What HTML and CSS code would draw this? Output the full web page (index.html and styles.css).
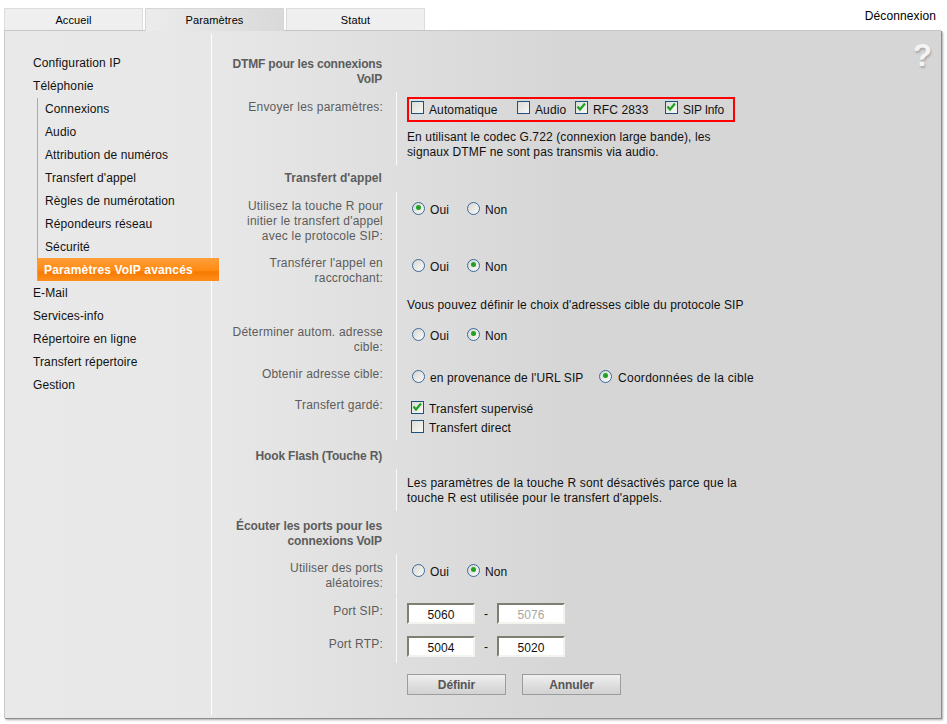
FILE: index.html
```html
<!DOCTYPE html>
<html lang="fr">
<head>
<meta charset="utf-8">
<title>Paramètres VoIP avancés</title>
<link rel="stylesheet" href="styles.css">
</head>
<body>
<header class="top">
  <nav class="tabs">
    <a class="tab">Accueil</a>
    <a class="tab active">Paramètres</a>
    <a class="tab">Statut</a>
  </nav>
  <a class="logout">Déconnexion</a>
</header>
<main class="panel">
  <aside class="side">
    <ul class="menu">
      <li>Configuration IP</li>
      <li>Téléphonie
        <ul class="sub">
          <li>Connexions</li>
          <li>Audio</li>
          <li>Attribution de numéros</li>
          <li>Transfert d'appel</li>
          <li>Règles de numérotation</li>
          <li>Répondeurs réseau</li>
          <li>Sécurité</li>
          <li class="current">Paramètres VoIP avancés</li>
        </ul>
      </li>
      <li>E-Mail</li>
      <li>Services-info</li>
      <li>Répertoire en ligne</li>
      <li>Transfert répertoire</li>
      <li>Gestion</li>
    </ul>
  </aside>
  <section class="form">
    <span class="help">?</span>

    <h3 class="heading h-dtmf">DTMF pour les connexions<br>VoIP</h3>

    <div class="row r-send">
      <div class="lbl">Envoyer les paramètres:</div>
      <div class="val">
        <div class="redbox">
          <span class="opt o-auto"><i class="cb"></i>Automatique</span>
          <span class="opt o-audio"><i class="cb"></i>Audio</span>
          <span class="opt o-rfc"><i class="cb"><svg viewBox="0 0 11 11"><path d="M1.5 4.5L4 7.5 9 1.5"/></svg></i>RFC 2833</span>
          <span class="opt o-sip"><i class="cb"><svg viewBox="0 0 11 11"><path d="M1.5 4.5L4 7.5 9 1.5"/></svg></i>SIP Info</span>
        </div>
        <p class="note n-g722">En utilisant le codec G.722 (connexion large bande), les<br>signaux DTMF ne sont pas transmis via audio.</p>
      </div>
    </div>

    <h3 class="heading h-trans">Transfert d'appel</h3>

    <div class="row r-three">
      <div class="lbl">Utilisez la touche R pour<br>initier le transfert d'appel<br>avec le protocole SIP:</div>
      <div class="val"><div class="radios"><span class="opt o-oui"><i class="rd on"></i>Oui</span><span class="opt"><i class="rd"></i>Non</span></div></div>
    </div>
    <div class="row r-two">
      <div class="lbl">Transférer l'appel en<br>raccrochant:</div>
      <div class="val"><div class="radios"><span class="opt o-oui"><i class="rd"></i>Oui</span><span class="opt"><i class="rd on"></i>Non</span></div></div>
    </div>
    <div class="row r-vous">
      <div class="lbl"></div>
      <div class="val"><p class="note">Vous pouvez définir le choix d'adresses cible du protocole SIP</p></div>
    </div>
    <div class="row r-two">
      <div class="lbl">Déterminer autom. adresse<br>cible:</div>
      <div class="val"><div class="radios"><span class="opt o-oui"><i class="rd"></i>Oui</span><span class="opt"><i class="rd on"></i>Non</span></div></div>
    </div>
    <div class="row r-one">
      <div class="lbl">Obtenir adresse cible:</div>
      <div class="val"><div class="radios"><span class="opt o-url"><i class="rd"></i>en provenance de l'URL SIP</span><span class="opt o-cible"><i class="rd on"></i>Coordonnées de la cible</span></div></div>
    </div>
    <div class="row r-guard">
      <div class="lbl">Transfert gardé:</div>
      <div class="val">
        <div class="checks">
          <span class="opt"><i class="cb"><svg viewBox="0 0 11 11"><path d="M1.5 4.5L4 7.5 9 1.5"/></svg></i>Transfert supervisé</span>
          <span class="opt"><i class="cb"></i>Transfert direct</span>
        </div>
      </div>
    </div>

    <h3 class="heading h-hook">Hook Flash (Touche R)</h3>

    <div class="row r-hook">
      <div class="lbl"></div>
      <div class="val"><p class="note n-hook">Les paramètres de la touche R sont désactivés parce que la<br>touche R est utilisée pour le transfert d'appels.</p></div>
    </div>

    <h3 class="heading h-ports">Écouter les ports pour les<br>connexions VoIP</h3>

    <div class="row r-rand">
      <div class="lbl">Utiliser des ports<br>aléatoires:</div>
      <div class="val"><div class="radios"><span class="opt o-oui"><i class="rd"></i>Oui</span><span class="opt"><i class="rd on"></i>Non</span></div></div>
    </div>
    <div class="row r-port">
      <div class="lbl">Port SIP:</div>
      <div class="val ports"><span class="field">5060</span><span class="dash">-</span><span class="field off">5076</span></div>
    </div>
    <div class="row r-port">
      <div class="lbl">Port RTP:</div>
      <div class="val ports"><span class="field">5004</span><span class="dash">-</span><span class="field">5020</span></div>
    </div>
    <div class="actions">
      <button class="btn">Définir</button>
      <button class="btn">Annuler</button>
    </div>
  </section>
</main>
</body>
</html>
```
FILE: styles.css
```css
* { box-sizing: border-box; }
html, body { margin: 0; padding: 0; }
body {
  width: 947px;
  height: 724px;
  overflow: hidden;
  background: #fff;
  font-family: "Liberation Sans", Arial, sans-serif;
  font-size: 12px;
  line-height: 15px;
  letter-spacing: 0.11px;
  color: #000;
}
ul { list-style: none; margin: 0; padding: 0; }
p, h3 { margin: 0; }

/* top bar */
.top { display: flex; justify-content: space-between; height: 30px; padding-left: 4px; }
.tabs { display: flex; gap: 2px; padding-top: 8px; }
.tab {
  width: 139px;
  height: 22px;
  border: 1px solid #dcdcdc;
  border-bottom: 0;
  background: #efefef;
  text-align: center;
  line-height: 23px;
  font-size: 11px;
}
.tab.active {
  height: 23px;
  background: linear-gradient(90deg, #ececec, #d9d9d9);
  border-color: #d6d6d6;
  position: relative;
  z-index: 1;
}
.logout { padding: 8px 11px 0 0; line-height: 16px; }

/* panel */
.panel {
  display: flex;
  width: 937px;
  height: 688px;
  margin-left: 4px;
  padding: 3px 0 0;
  background: linear-gradient(90deg, #e9e9e9 0, #e7e7e7 220px, #d6d6d6 560px);
  border-top: 1px solid #c6c6c6;
  border-left: 1px solid #c9c9c9;
  box-shadow: 1px 1px 0 #8c8c8c, 2px 2px 2px #aaa;
}

/* side menu */
.side { width: 207px; height: 681px; flex: none; border-right: 1px solid #fff; padding: 18px 0 0 28px; }
.menu > li { line-height: 23px; color: #111; }
.sub { margin-left: 4px; border-left: 1px solid #aaa; }
.sub li { padding-left: 7px; line-height: 23px; }
.sub .current {
  width: 181px;
  height: 23px;
  padding-left: 6px;
  margin-top: -1px;
  margin-bottom: 1px;
  line-height: 25px;
  color: #fff;
  font-weight: bold;
  letter-spacing: 0.17px;
  background: linear-gradient(180deg, #ff9f3a 0, #ff8a12 55%, #f57a00 60%, #ff8e1c 100%);
  position: relative;
}

/* form */
.form { position: relative; width: 729px; padding: 23px 0 0 7px; color: #5c5c5c; }
.help {
  position: absolute;
  right: 9px;
  top: 4px;
  font-size: 31px;
  line-height: 36px;
  font-weight: bold;
  color: #f4f4f4;
  text-shadow: 1px 2px 2px #aaa;
}
.heading { width: 163px; font-size: 12px; line-height: 15px; font-weight: bold; letter-spacing: -0.16px; text-align: right; color: #5c5c5c; }
.h-dtmf { height: 35px; }
.h-trans { height: 27px; padding-top: 6px; letter-spacing: 0.08px; }
.h-hook { height: 29px; padding-top: 9px; }
.h-ports { height: 43px; padding-top: 8px; letter-spacing: -0.08px; }

.row { display: flex; }
.lbl { width: 164px; flex: none; text-align: right; padding-top: 7px; letter-spacing: 0.2px; }
.val { margin-left: 13px; padding-left: 10px; border-left: 1px solid #fafafa; color: #111; flex: 1; }
.note { color: #111; padding-top: 7px; }
.note.n-hook { letter-spacing: 0.18px; }

.r-send { height: 73px; }
.r-send .lbl { padding-top: 8px; }
.r-three { height: 57px; }
.r-two { height: 42px; }
.r-vous { height: 27px; }
.r-one { height: 31px; }
.r-guard { height: 49px; }
.r-hook { height: 42px; }
.r-rand { height: 42px; margin-bottom: 1px; }
.r-port { height: 33px; }

.redbox {
  display: flex;
  width: 328px;
  height: 25px;
  border: 2px solid #f00;
  align-items: center;
  padding: 1px 0 0 2px;
  margin-top: 5px;
}
.note.n-g722 { padding-top: 8px; }

.opt { display: inline-flex; align-items: center; white-space: nowrap; }
.cb {
  display: inline-block;
  width: 13px;
  height: 13px;
  margin-right: 5px;
  margin-top: -5px;
  border: 1px solid #1c5180;
  background: linear-gradient(135deg, #dcdcd6, #f8f8f8);
  flex: none;
}
.cb svg { display: block; width: 11px; height: 11px; fill: none; stroke: #21a121; stroke-width: 2.2; }
.o-auto { width: 106px; }
.o-audio { width: 58px; }
.o-rfc { width: 90px; }
.o-sip { letter-spacing: -0.2px; }

.radios { display: flex; align-items: center; height: 15px; margin-top: 11px; padding-left: 5px; }
.rd {
  position: relative;
  display: inline-block;
  width: 13px;
  height: 13px;
  margin-right: 5px;
  margin-top: -5px;
  border: 1.5px solid #3a6a9a;
  border-radius: 50%;
  background: linear-gradient(135deg, #d6d6d0, #fbfbfb);
  flex: none;
}
.rd.on::after {
  content: "";
  position: absolute;
  left: 2.5px;
  top: 2.5px;
  width: 5px;
  height: 5px;
  border-radius: 50%;
  background: #21a121;
}
.o-oui { width: 55px; }
.o-url { width: 187px; }
.o-cible { letter-spacing: 0.28px; }
.o-cible .rd { margin-right: 6px; }

.checks { display: flex; flex-direction: column; gap: 4px; padding: 11px 0 0 4px; }

.ports { display: flex; align-items: flex-start; padding-top: 6px; }
.field {
  width: 68px;
  height: 21px;
  background: #fff;
  border: 2px solid;
  border-color: #7e7e72 #f4f4ee #f4f4ee #7e7e72;
  text-align: center;
  line-height: 20px;
  color: #111;
}
.field.off { color: #a8a8a0; }
.dash { width: 22px; text-align: center; line-height: 22px; }

.actions { display: flex; gap: 16px; margin-left: 188px; padding-top: 11px; }
.btn {
  width: 99px;
  height: 21px;
  padding: 0;
  border: 1px solid #9c9c9c;
  background: linear-gradient(180deg, #f0f0f0, #dcdcdc 60%, #d2d2d2);
  font-family: inherit;
  font-size: 12px;
  font-weight: bold;
  letter-spacing: -0.1px;
  color: #555;
  line-height: 18px;
}
```
